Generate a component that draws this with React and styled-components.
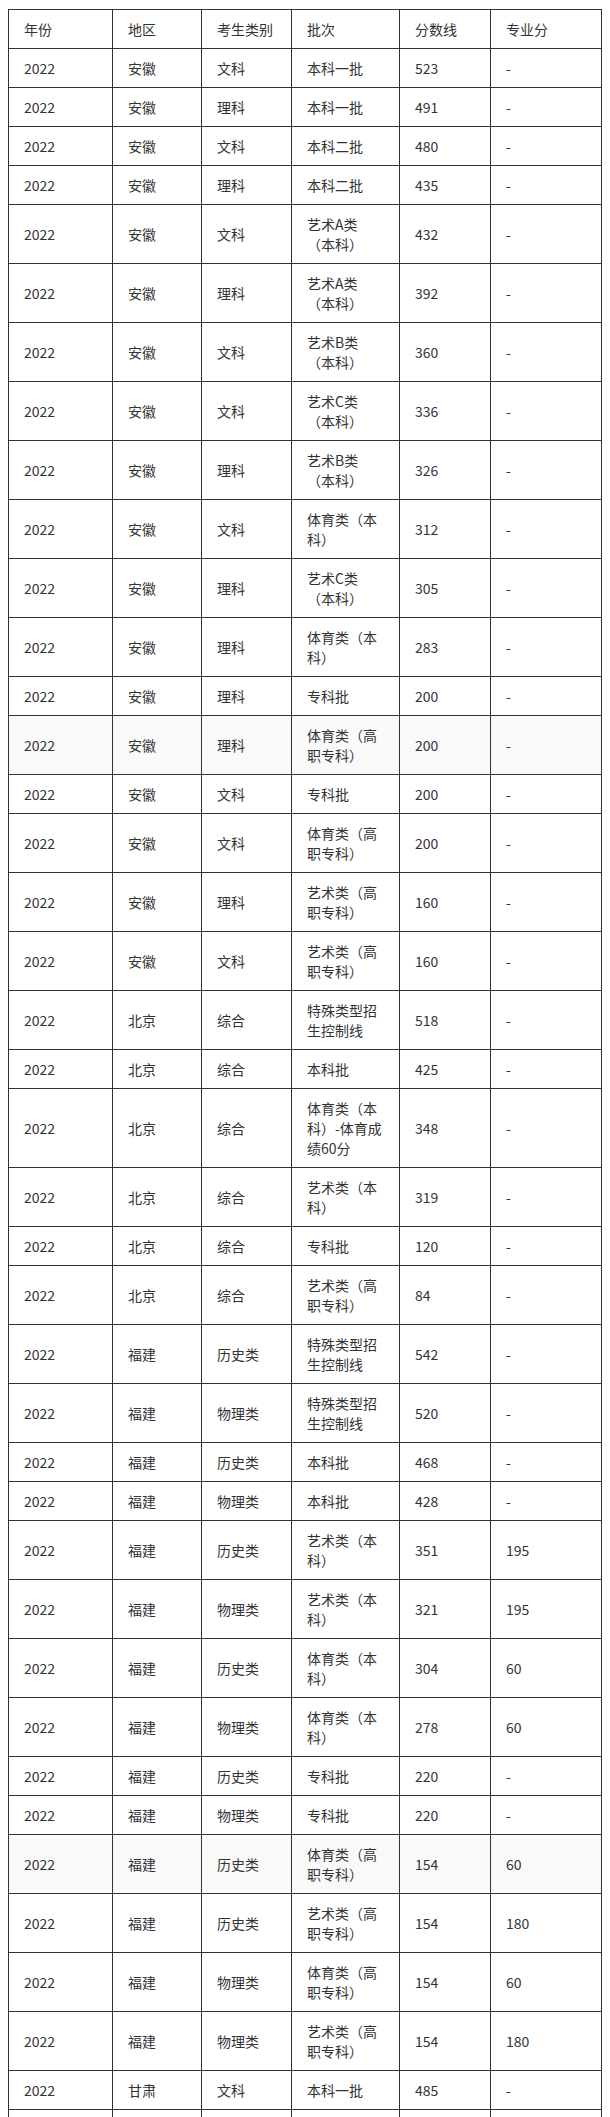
import React from 'react';
import styled, { createGlobalStyle } from 'styled-components';

const GlobalStyle = createGlobalStyle`
  body {
    margin: 0;
    background: #fff;
    font-family: "Noto Sans CJK SC", "Microsoft YaHei", sans-serif;
  }
`;

const Page = styled.div`
  padding: 9px 0 0 8px;
`;

const Table = styled.table`
  border-collapse: collapse;
  table-layout: fixed;
  width: 594px;
  font-size: 14px;
  line-height: 20px;
  color: #333;
`;

const Row = styled.tr`
  background: ${(p) => (p.$shade ? '#f9f9f9' : '#fff')};
`;

const Cell = styled.td`
  border: 1px solid #333;
  padding: 9px 16px 9px 15px;
  height: 20px;
  text-align: left;
  vertical-align: middle;
  word-break: normal;
`;

const HeadCell = styled(Cell).attrs({ as: 'th' })`
  font-weight: 400;
`;

// 列宽按截图量出来的
const colWidths = [104, 89, 90, 108, 91, 111];
const columns = ['年份', '地区', '考生类别', '批次', '分数线', '专业分'];

const rows = [
  ['安徽', '文科', '本科一批', '523', '-'],
  ['安徽', '理科', '本科一批', '491', '-'],
  ['安徽', '文科', '本科二批', '480', '-'],
  ['安徽', '理科', '本科二批', '435', '-'],
  ['安徽', '文科', '艺术A类（本科）', '432', '-'],
  ['安徽', '理科', '艺术A类（本科）', '392', '-'],
  ['安徽', '文科', '艺术B类（本科）', '360', '-'],
  ['安徽', '文科', '艺术C类（本科）', '336', '-'],
  ['安徽', '理科', '艺术B类（本科）', '326', '-'],
  ['安徽', '文科', '体育类（本科）', '312', '-'],
  ['安徽', '理科', '艺术C类（本科）', '305', '-'],
  ['安徽', '理科', '体育类（本科）', '283', '-'],
  ['安徽', '理科', '专科批', '200', '-'],
  ['安徽', '理科', '体育类（高职专科）', '200', '-', true],
  ['安徽', '文科', '专科批', '200', '-'],
  ['安徽', '文科', '体育类（高职专科）', '200', '-'],
  ['安徽', '理科', '艺术类（高职专科）', '160', '-'],
  ['安徽', '文科', '艺术类（高职专科）', '160', '-'],
  ['北京', '综合', '特殊类型招生控制线', '518', '-'],
  ['北京', '综合', '本科批', '425', '-'],
  ['北京', '综合', '体育类（本科）-体育成绩60分', '348', '-'],
  ['北京', '综合', '艺术类（本科）', '319', '-'],
  ['北京', '综合', '专科批', '120', '-'],
  ['北京', '综合', '艺术类（高职专科）', '84', '-'],
  ['福建', '历史类', '特殊类型招生控制线', '542', '-'],
  ['福建', '物理类', '特殊类型招生控制线', '520', '-'],
  ['福建', '历史类', '本科批', '468', '-'],
  ['福建', '物理类', '本科批', '428', '-'],
  ['福建', '历史类', '艺术类（本科）', '351', '195'],
  ['福建', '物理类', '艺术类（本科）', '321', '195'],
  ['福建', '历史类', '体育类（本科）', '304', '60'],
  ['福建', '物理类', '体育类（本科）', '278', '60'],
  ['福建', '历史类', '专科批', '220', '-'],
  ['福建', '物理类', '专科批', '220', '-'],
  ['福建', '历史类', '体育类（高职专科）', '154', '60', true],
  ['福建', '历史类', '艺术类（高职专科）', '154', '180'],
  ['福建', '物理类', '体育类（高职专科）', '154', '60'],
  ['福建', '物理类', '艺术类（高职专科）', '154', '180'],
  ['甘肃', '文科', '本科一批', '485', '-'],
];

export default function App() {
  return (
    <Page>
      <GlobalStyle />
      <Table>
        <colgroup>
          {colWidths.map((w, i) => (
            <col key={i} style={{ width: w }} />
          ))}
        </colgroup>
        <thead>
          <Row>
            {columns.map((c) => (
              <HeadCell key={c}>{c}</HeadCell>
            ))}
          </Row>
        </thead>
        <tbody>
          {rows.map(([area, type, batch, score, major, shade], i) => (
            <Row key={i} $shade={shade}>
              <Cell>2022</Cell>
              <Cell>{area}</Cell>
              <Cell>{type}</Cell>
              <Cell>{batch}</Cell>
              <Cell>{score}</Cell>
              <Cell>{major}</Cell>
            </Row>
          ))}
          {/* 下一行被截图截断，只露出上边框 */}
          <Row>
            {columns.map((c) => (
              <Cell key={c} />
            ))}
          </Row>
        </tbody>
      </Table>
    </Page>
  );
}
